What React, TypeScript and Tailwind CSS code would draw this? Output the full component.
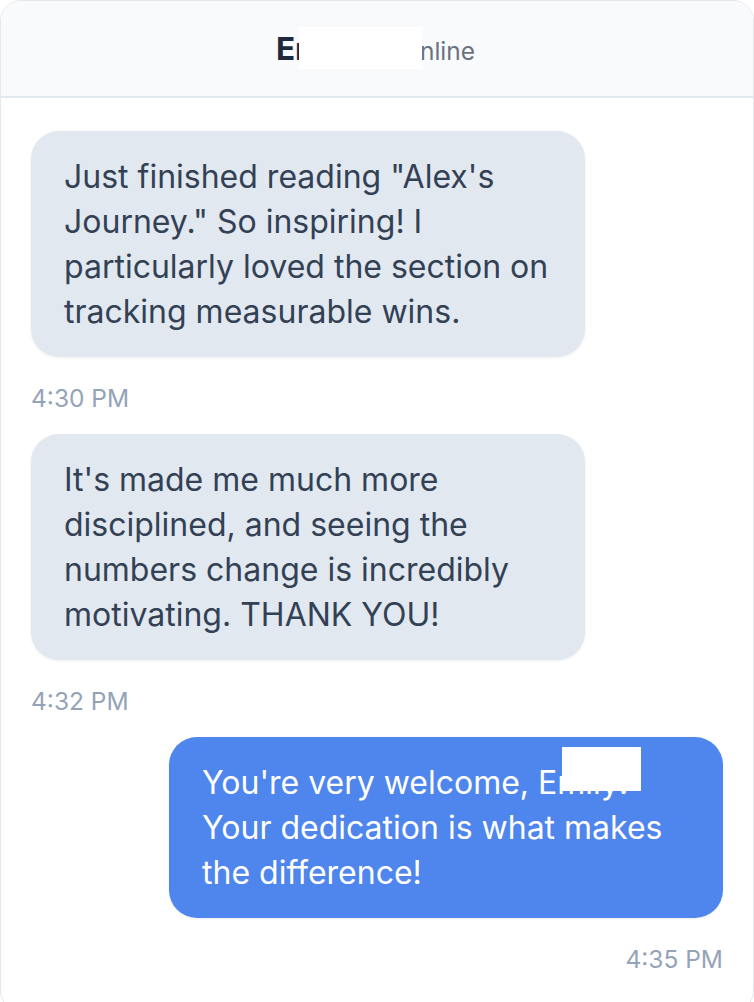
const messages = [
  {
    id: 1,
    from: 'them',
    text: 'Just finished reading "Alex\'s Journey." So inspiring! I particularly loved the section on tracking measurable wins.',
    time: '4:30 PM',
  },
  {
    id: 2,
    from: 'them',
    text: "It's made me much more disciplined, and seeing the numbers change is incredibly motivating. THANK YOU!",
    time: '4:32 PM',
  },
  {
    id: 3,
    from: 'me',
    text: "You're very welcome, Emily! Your dedication is what makes the difference!",
    time: '4:35 PM',
  },
]

export default function App() {
  return (
    <div className="bg-white font-['Inter','Liberation_Sans',sans-serif]">
      <div className="h-[1012px] w-full rounded-[21px] border border-[#e5e7eb] bg-white overflow-hidden">
        {/* Header */}
        <div className="relative h-[97px] bg-[#f8fafc] border-b-2 border-[#e2e8f0] flex items-center justify-center">
          <div className="flex items-baseline gap-[45px] -ml-[3px]">
            <span className="text-[31.5px] font-bold text-[#1e293b]">Emily</span>
            <span className="text-[24.5px] text-[#6b7280]">online</span>
          </div>
          <div className="absolute left-[298px] top-[26px] w-[123px] h-[42px] bg-white" />
        </div>

        {/* Messages */}
        <div className="px-[30px] pt-[33px] flex flex-col">
          {messages.map((m, i) => (
            <div
              key={m.id}
              className={`flex flex-col ${m.from === 'me' ? 'items-end' : 'items-start'} ${i > 0 ? 'mt-[18px]' : ''}`}
            >
              <div
                className={`relative max-w-[554px] rounded-[28px] px-[33px] py-[23px] text-[32px] leading-[45px] shadow-[0_1px_3px_rgba(0,0,0,0.07)] ${
                  m.from === 'me' ? 'bg-[#4f86ed] text-white' : 'bg-[#e2e8f0] text-[#334155]'
                }`}
              >
                {m.text}
                {m.from === 'me' && (
                  <div className="absolute left-[393px] top-[10px] w-[79px] h-[44px] bg-white" />
                )}
              </div>
              <div className="mt-[24px] text-[24.5px] leading-[35px] text-[#94a3b8]">{m.time}</div>
            </div>
          ))}
        </div>
      </div>
    </div>
  )
}
